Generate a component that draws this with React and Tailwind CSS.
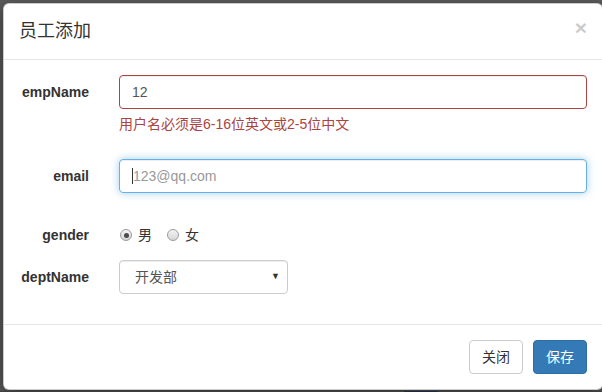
import React from 'react';

// Bootstrap-3 style "add employee" modal over a dimmed page.
const font = "font-['Liberation_Sans','Noto_Sans_CJK_SC',sans-serif]";

function Label({ children }) {
  return (
    <label className="w-[70px] shrink-0 pt-[7px] text-right text-[14px] font-bold leading-[20px] text-[#333]">
      {children}
    </label>
  );
}

function Radio({ checked, children }) {
  return (
    <span className="flex items-center">
      <span className="flex h-[12px] w-[12px] items-center justify-center rounded-full border border-[#9b9b9b] bg-gradient-to-b from-[#f4f4f4] to-[#d6d6d6]">
        {checked && <span className="h-[5px] w-[5px] rounded-full bg-[#4a4a4a]" />}
      </span>
      <span className="ml-[6px] text-[14px] leading-[20px] text-[#333]">{children}</span>
    </span>
  );
}

export default function App() {
  return (
    <div className={`${font} flex h-[392px] w-[602px] flex-col overflow-hidden bg-[#5b5b5b] pl-[3px] pt-[3px]`}>
      <div className="w-[600px] shrink-0 rounded-[6px] border border-black/20 bg-white shadow-[0_5px_15px_rgba(0,0,0,0.5)]">
        {/* header */}
        <div className="flex items-start justify-between border-b border-[#e5e5e5] p-[15px]">
          <h4 className="text-[18px] leading-[25px] text-[#333]">员工添加</h4>
          <span className="mt-[-2px] text-[21px] font-bold leading-[21px] text-black opacity-20">×</span>
        </div>

        {/* body */}
        <div className="flex flex-col p-[15px]">
          <div className="mb-[15px] flex gap-[30px]">
            <Label>empName</Label>
            <div className="flex flex-1 flex-col">
              <div className="flex h-[34px] items-center rounded-[4px] border border-[#a94442] px-[12px] text-[14px] text-[#555] shadow-[inset_0_1px_1px_rgba(0,0,0,0.075)]">
                12
              </div>
              <span className="mb-[10px] mt-[5px] text-[14px] leading-[20px] text-[#a94442]">
                用户名必须是6-16位英文或2-5位中文
              </span>
            </div>
          </div>

          <div className="mb-[25px] flex gap-[30px]">
            <Label>email</Label>
            <div className="flex h-[34px] flex-1 items-center rounded-[4px] border border-[#66afe9] px-[12px] text-[14px] shadow-[inset_0_1px_1px_rgba(0,0,0,0.075),0_0_8px_rgba(102,175,233,0.6)]">
              <span className="h-[16px] w-px bg-[#333]" />
              <span className="text-[#999]">123@qq.com</span>
            </div>
          </div>

          <div className="mb-[15px] flex gap-[30px]">
            <Label>gender</Label>
            <div className="flex gap-[15px] pl-px pt-[7px]">
              <Radio checked>男</Radio>
              <Radio>女</Radio>
            </div>
          </div>

          <div className="mb-[15px] flex gap-[30px]">
            <Label>deptName</Label>
            <div className="flex h-[34px] w-[169px] items-center justify-between rounded-[4px] border border-[#ccc] pl-[15px] pr-[7px] text-[14px] text-[#555] shadow-[inset_0_1px_1px_rgba(0,0,0,0.075)]">
              <span>开发部</span>
              <span className="text-[9px] text-[#333]">▼</span>
            </div>
          </div>
        </div>

        {/* footer */}
        <div className="flex justify-end gap-[10px] border-t border-[#e5e5e5] p-[15px]">
          <button className="h-[34px] rounded-[4px] border border-[#ccc] bg-white px-[12px] text-[14px] text-[#333]">
            关闭
          </button>
          <button className="h-[34px] rounded-[4px] border border-[#2e6da4] bg-[#337ab7] px-[12px] text-[14px] text-white">
            保存
          </button>
        </div>
      </div>

      {/* dimmed page underneath */}
      <div className="ml-[-3px] mt-px flex h-[10px] bg-[#3e3e3e]">
        <span className="ml-[404px] h-full w-[34px] bg-[#1c2a3c]" />
      </div>
    </div>
  );
}
